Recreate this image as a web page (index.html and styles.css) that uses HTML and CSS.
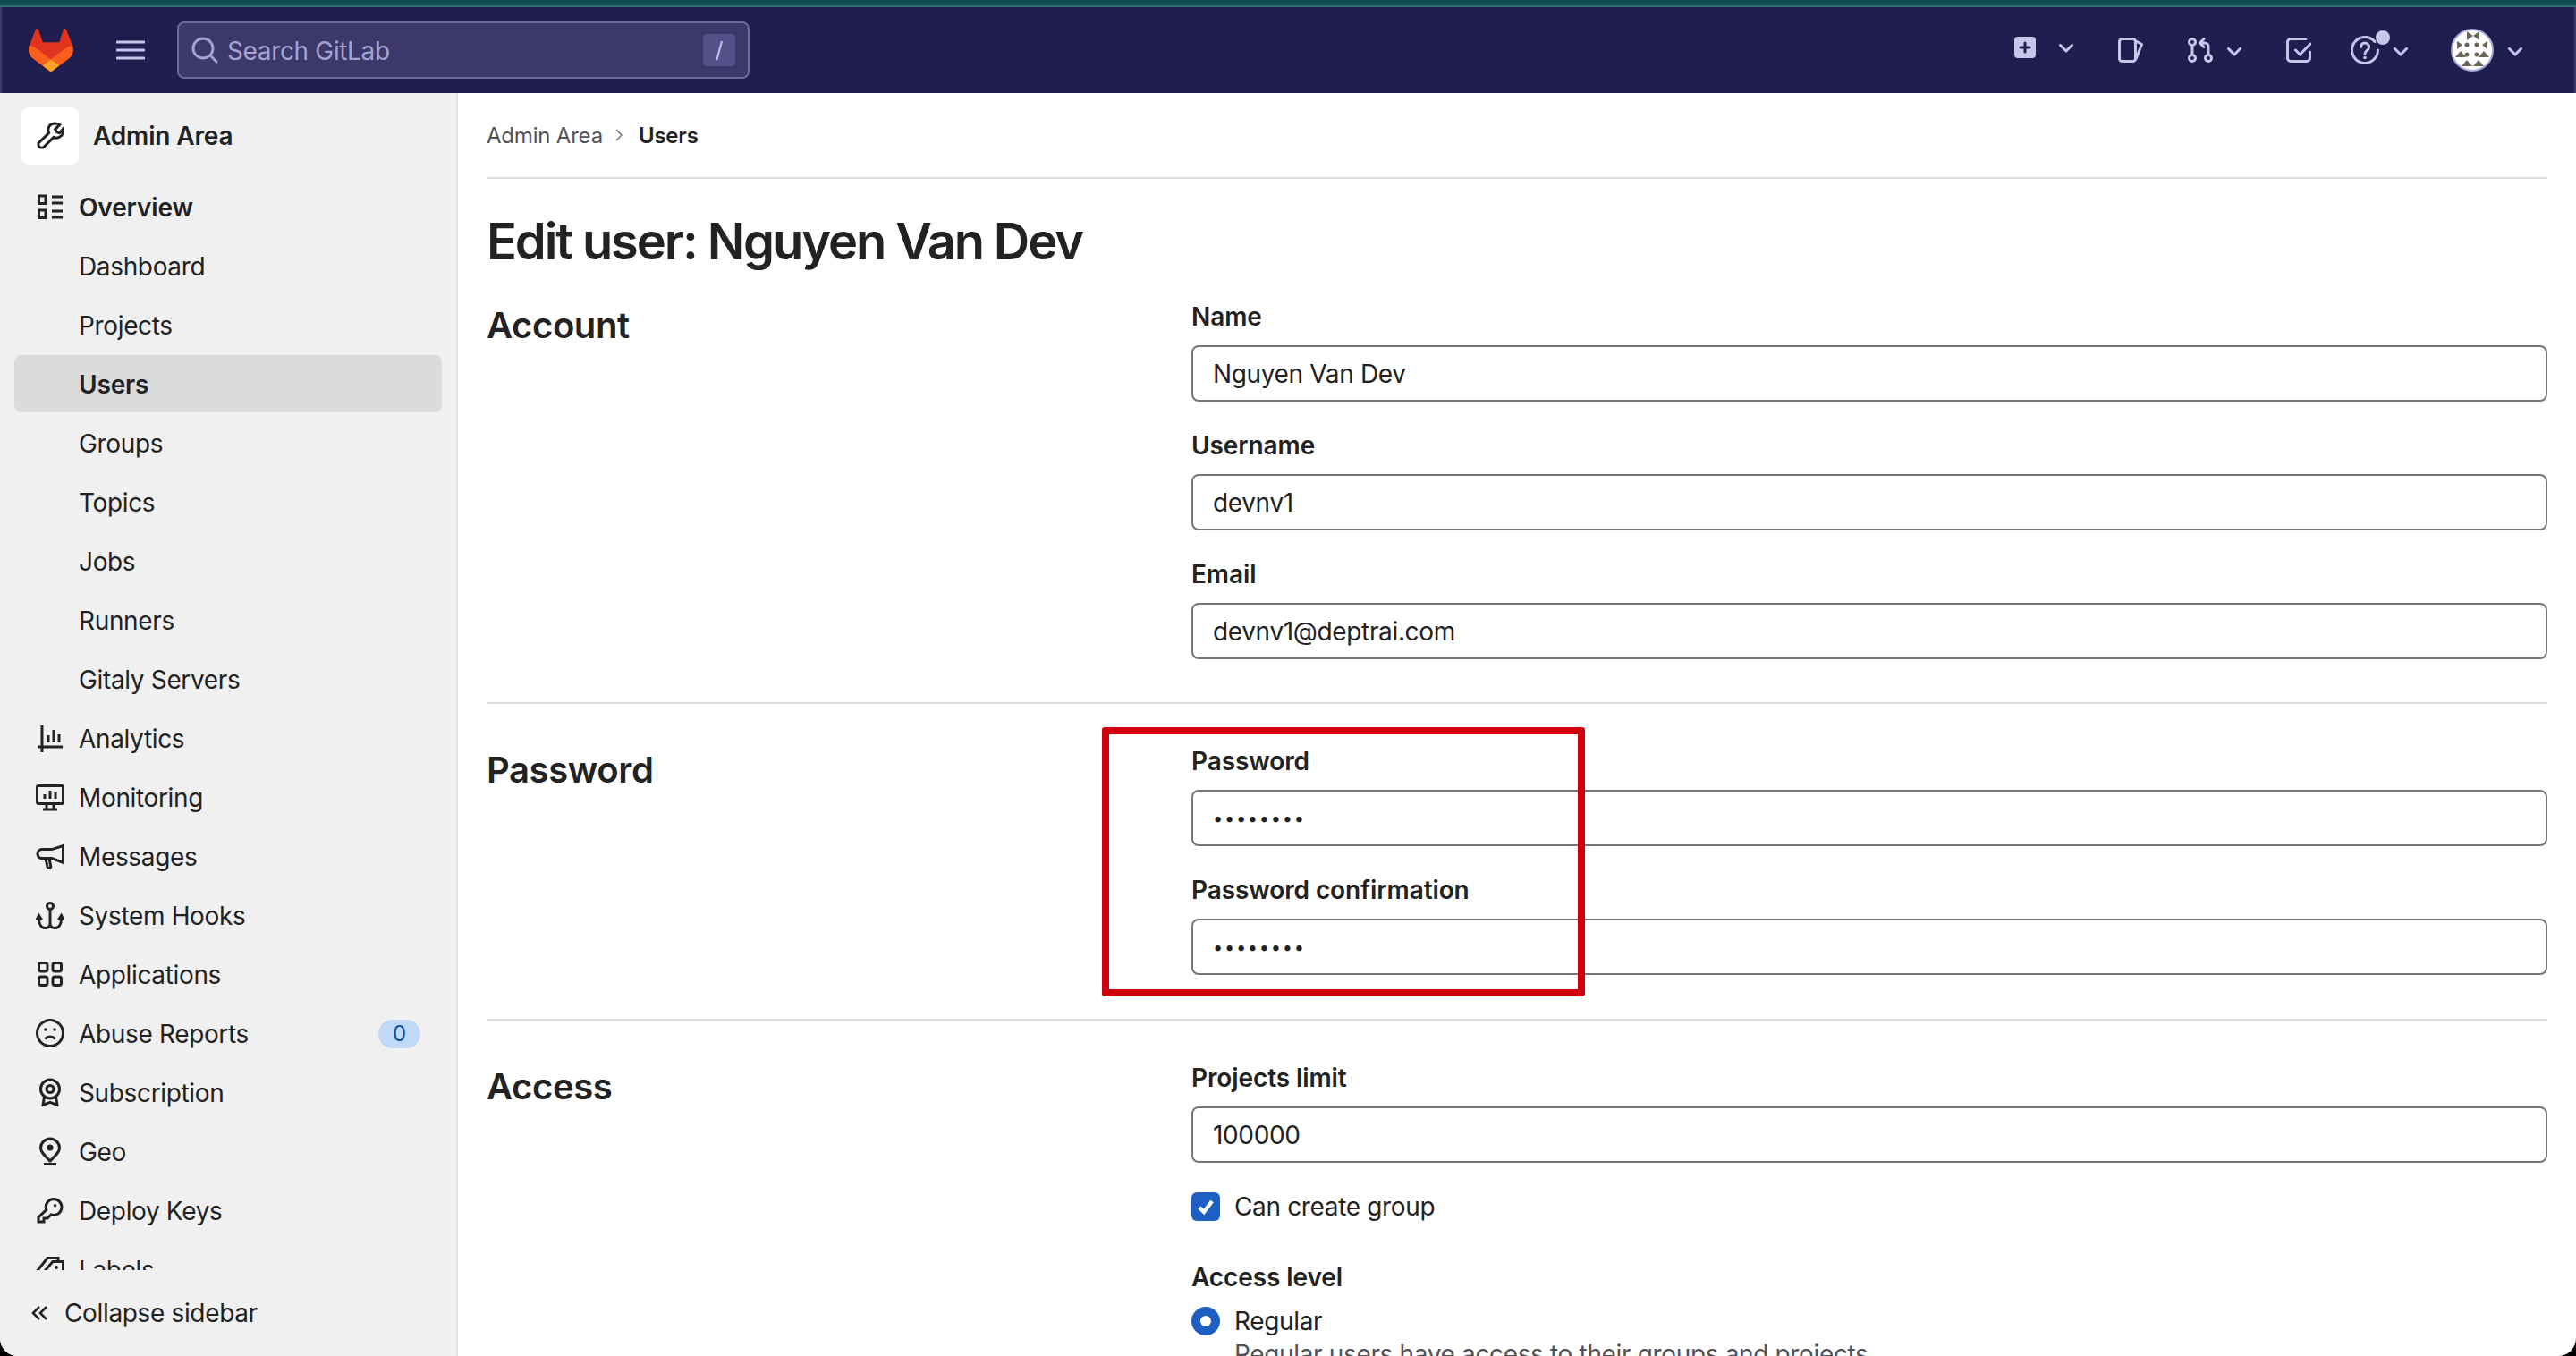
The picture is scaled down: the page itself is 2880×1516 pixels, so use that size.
FILE: index.html
```html
<!DOCTYPE html>
<html lang="en">
<head>
    <meta charset="UTF-8">
    <title>Edit user - Admin Area - GitLab</title>
    <link rel="stylesheet" href="styles.css">
</head>
<body>
<div class="page">
    <div class="top-strip"></div>

    <!-- top navbar -->
    <header class="navbar">
        <svg class="logo" viewBox="0 0 25 24">
            <path d="m24.507 9.5-.034-.09L21.082.562a.896.896 0 0 0-1.694.091l-2.29 7.01H7.825L5.535.653a.898.898 0 0 0-1.694-.09L.451 9.411.416 9.5a6.297 6.297 0 0 0 2.09 7.278l.012.01.03.022 5.16 3.867 2.56 1.935 1.554 1.176a1.051 1.051 0 0 0 1.268 0l1.555-1.176 2.56-1.935 5.197-3.89.014-.01A6.297 6.297 0 0 0 24.507 9.5Z" fill="#e0341f"/>
            <path d="m24.507 9.5-.034-.09a11.44 11.44 0 0 0-4.56 2.051l-7.447 5.632 4.742 3.584 5.197-3.89.014-.01A6.297 6.297 0 0 0 24.507 9.5Z" fill="#fb5f1e"/>
            <path d="m7.707 20.677 2.56 1.935 1.555 1.176a1.051 1.051 0 0 0 1.268 0l1.555-1.176 2.56-1.935-4.743-3.584-4.755 3.584Z" fill="#fca326"/>
            <path d="M5.01 11.461a11.43 11.43 0 0 0-4.56-2.05L.416 9.5a6.297 6.297 0 0 0 2.09 7.278l.012.01.03.022 5.16 3.867 4.745-3.584-7.444-5.632Z" fill="#fb5f1e"/>
        </svg>
        <svg class="hamburger" viewBox="0 0 32 22"><path d="M1 2h30M1 11h30M1 20h30"/></svg>
        <div class="search">
            <svg class="search-icon" viewBox="0 0 30 30"><circle cx="13" cy="13" r="11"/><path d="m21 21 7 7"/></svg>
            <span class="search-text">Search GitLab</span>
            <kbd class="search-key">/</kbd>
        </div>
        <div class="nav-actions">
            <div class="nav-action">
                <svg class="nav-plus" viewBox="0 0 24 24"><rect width="24" height="24" rx="4" fill="#c7c5ea"/><path d="M12 7v10M7 12h10" stroke="#1f1e4f" stroke-width="3" stroke-linecap="round" fill="none"/></svg>
                <svg class="chevron chevron-high" viewBox="0 0 16 10"><path d="m1.5 1.5 6.5 6.5 6.5-6.5"/></svg>
            </div>
            <svg class="nav-icon" viewBox="0 0 28 28"><rect x="1.5" y="1.5" width="18" height="25" rx="3"/><path d="m20 4 6.5 3.5L20 24"/></svg>
            <div class="nav-action">
                <svg class="nav-icon" viewBox="0 0 28 28"><circle cx="5" cy="5" r="3.5"/><circle cx="5" cy="23" r="3.5"/><circle cx="23" cy="23" r="3.5"/><path d="M5 8.5v11M23 19.5V10a4 4 0 0 0-4-4h-4M18 1.5 13.5 6l4.5 4.5"/></svg>
                <svg class="chevron" viewBox="0 0 16 10"><path d="m1.5 1.5 6.5 6.5 6.5-6.5"/></svg>
            </div>
            <svg class="nav-icon" viewBox="0 0 28 28"><path d="M22 1.5H5A3.500 3.500 0 0 0 1.500 5v18A3.500 3.500 0 0 0 5 26.500h18a3.500 3.500 0 0 0 3.500-3.500v-7"/><path d="m10.500 14 5 5L27 7"/></svg>
            <div class="nav-action nav-help">
                <svg class="nav-help-icon" viewBox="0 0 32 32"><path d="M27 6.500A14.500 14.500 0 1 0 30.500 16"/><path d="M11.500 12.500a4.500 4.500 0 1 1 7 3.700c-1.500 1-2.500 1.800-2.500 3.800"/><circle cx="16" cy="24.500" r="1.800" class="icon-solid"/></svg>
                <span class="help-dot"></span>
                <svg class="chevron" viewBox="0 0 16 10"><path d="m1.5 1.5 6.5 6.5 6.5-6.5"/></svg>
            </div>
            <div class="nav-action nav-user">
                <svg class="avatar" viewBox="0 0 48 48">
                    <circle cx="24" cy="24" r="23" fill="#fff" stroke="#a9a6d8" stroke-width="2"/>
                    <path fill="#6b6459" d="M18 3l7 5-7 5zM32 3l-7 5 7 5zM7 14l6 4-6 5zM41 14l-6 4 6 5zM5 32l6-7 6 7zM31 32l6-7 6 7zM12 42l6-7 6 7zM25 42l6-7 6 7z"/>
                    <circle cx="18" cy="18" r="2.500" fill="#6b6459"/><circle cx="29" cy="18" r="2.500" fill="#6b6459"/>
                    <circle cx="18" cy="29" r="2.500" fill="#6b6459"/><circle cx="29" cy="29" r="2.500" fill="#6b6459"/>
                </svg>
                <svg class="chevron" viewBox="0 0 16 10"><path d="m1.5 1.5 6.5 6.5 6.5-6.5"/></svg>
            </div>
        </div>
    </header>

    <div class="layout">
        <!-- sidebar -->
        <aside class="sidebar">
            <div class="sidebar-head">
                <span class="sidebar-tile">
                    <svg class="icon" viewBox="0 0 16 16"><path d="M13.300 1.800 10.800 4.300l.9 1.500 1.500.6 2-2.300c.4 2-.4 4-2.400 4.700-1 .4-2 .3-2.800-.1L4.700 14c-.8.800-2.100.7-2.800 0-.6-.7-.6-1.800.1-2.500l5.300-5.200c-.5-1-.5-2.300 0-3.300C8.100 1.100 11 .4 13.300 1.800Z"/></svg>
                </span>
                <span class="sidebar-title">Admin Area</span>
            </div>
            <nav class="sidebar-nav">
                <a class="nav-link nav-link-bold">
                    <svg class="icon" viewBox="0 0 16 16"><rect x="1.750" y="2" width="3.750" height="4.250"/><rect x="1.750" y="10" width="3.750" height="4.250"/><path d="M9 2.500h6M9 6h6M9 10.500h6M9 14h6"/></svg>
                    <span class="nav-text">Overview</span>
                </a>
                <a class="nav-link nav-sub"><span class="nav-text">Dashboard</span></a>
                <a class="nav-link nav-sub"><span class="nav-text">Projects</span></a>
                <a class="nav-link nav-sub nav-link-active"><span class="nav-text">Users</span></a>
                <a class="nav-link nav-sub"><span class="nav-text">Groups</span></a>
                <a class="nav-link nav-sub"><span class="nav-text">Topics</span></a>
                <a class="nav-link nav-sub"><span class="nav-text">Jobs</span></a>
                <a class="nav-link nav-sub"><span class="nav-text">Runners</span></a>
                <a class="nav-link nav-sub"><span class="nav-text">Gitaly Servers</span></a>
                <a class="nav-link">
                    <svg class="icon" viewBox="0 0 16 16"><path d="M3.500 1v15M1 13h14M7 6.500V10.500M10 3.500v7M13 6v4.500"/></svg>
                    <span class="nav-text">Analytics</span>
                </a>
                <a class="nav-link">
                    <svg class="icon" viewBox="0 0 16 16"><rect x=".75" y="1.750" width="14.500" height="10" rx=".7"/><path d="M4 15h8M6 12v3M10 12v3M5 6.500v2.500M8 4.500v4.500M11 5.500v3.500"/></svg>
                    <span class="nav-text">Monitoring</span>
                </a>
                <a class="nav-link">
                    <svg class="icon" viewBox="0 0 16 16"><path d="M15.250 2.300v9.400L9 9.300H3.500a2.500 2.500 0 0 1 0-5H9ZM5.500 9.500l1 4.700c.4 1 2 .6 1.900-.5l-.9-4"/></svg>
                    <span class="nav-text">Messages</span>
                </a>
                <a class="nav-link">
                    <svg class="icon" viewBox="0 0 16 16"><circle cx="8" cy="3" r="1.750"/><path d="M8 4.750V12.500c0 1.600-1 2.750-2.500 2.750-2.300 0-3.750-2-3.750-5V8.500M8 12.500c0 1.600 1 2.750 2.500 2.750 2.300 0 3.750-2 3.750-5V8.500"/><path d="m.5 10.700 1.250-2.400L3.300 10.700M12.700 10.700l1.550-2.400 1.250 2.400"/></svg>
                    <span class="nav-text">System Hooks</span>
                </a>
                <a class="nav-link">
                    <svg class="icon" viewBox="0 0 16 16"><rect x="1.750" y="1.750" width="4.750" height="4.750" rx="1.200"/><rect x="9.500" y="1.750" width="4.750" height="4.750" rx="1.200"/><rect x="1.750" y="9.500" width="4.750" height="4.750" rx="1.200"/><rect x="9.500" y="9.500" width="4.750" height="4.750" rx="1.200"/></svg>
                    <span class="nav-text">Applications</span>
                </a>
                <a class="nav-link">
                    <svg class="icon" viewBox="0 0 16 16"><circle cx="8" cy="8" r="7.250"/><circle cx="5.500" cy="6" r=".9" class="icon-solid"/><circle cx="10.500" cy="6" r=".9" class="icon-solid"/><path d="M5.200 11.300c1.500-1.700 4.100-1.700 5.600 0"/></svg>
                    <span class="nav-text">Abuse Reports</span>
                    <span class="badge">0</span>
                </a>
                <a class="nav-link">
                    <svg class="icon" viewBox="0 0 16 16"><circle cx="8" cy="6.250" r="5.250"/><circle cx="8" cy="6.250" r="2"/><path d="m4.800 10.500-.8 4.700 4-1.500 4 1.500-.8-4.700"/></svg>
                    <span class="nav-text">Subscription</span>
                </a>
                <a class="nav-link">
                    <svg class="icon" viewBox="0 0 16 16"><path d="M8 13.500c-3-3-5.250-5-5.250-7.250a5.250 5.250 0 0 1 10.500 0C13.250 8.500 11 10.500 8 13.500ZM4.500 15.250h7"/><circle cx="8" cy="6" r="1.750" class="icon-solid"/></svg>
                    <span class="nav-text">Geo</span>
                </a>
                <a class="nav-link">
                    <svg class="icon" viewBox="0 0 16 16"><path d="M10 1.750a4.500 4.500 0 1 1-1.500 8.750L6.500 12.500h-2v2h-3V12l4.400-4.200A4.500 4.500 0 0 1 10 1.750Z"/><circle cx="10.800" cy="5.400" r=".9" class="icon-solid"/></svg>
                    <span class="nav-text">Deploy Keys</span>
                </a>
                <a class="nav-link">
                    <svg class="icon" viewBox="0 0 16 16"><path d="M.75 9 6.500 1.750h6V3.500M5 9l4.500-5.250h5.750V12L10.500 15.250 5 9Z"/><circle cx="11.500" cy="7" r="1" class="icon-solid"/></svg>
                    <span class="nav-text">Labels</span>
                </a>
            </nav>
            <div class="collapse">
                <svg class="collapse-icon" viewBox="0 0 18 18"><path d="M9 2 2 9l7 7M17 2l-7 7 7 7"/></svg>
                Collapse sidebar
            </div>
        </aside>

        <main class="content">
            <div class="breadcrumb">
                <span class="crumb">Admin Area</span>
                <svg class="crumb-sep" viewBox="0 0 8 14"><path d="m1 1 6 6-6 6"/></svg>
                <span class="crumb-current">Users</span>
            </div>
            <h1 class="page-title">Edit user: Nguyen Van Dev</h1>

            <section class="form-section">
                <h2 class="section-title">Account</h2>
                <div class="section-fields">
                    <div class="field">
                        <label class="field-label">Name</label>
                        <input class="field-input" type="text" value="Nguyen Van Dev">
                    </div>
                    <div class="field">
                        <label class="field-label">Username</label>
                        <input class="field-input" type="text" value="devnv1">
                    </div>
                    <div class="field">
                        <label class="field-label">Email</label>
                        <input class="field-input" type="text" value="devnv1@deptrai.com">
                    </div>
                </div>
            </section>

            <section class="form-section">
                <h2 class="section-title">Password</h2>
                <div class="section-fields">
                    <div class="field">
                        <label class="field-label">Password</label>
                        <input class="field-input field-password" type="password" value="12345678">
                    </div>
                    <div class="field">
                        <label class="field-label">Password confirmation</label>
                        <input class="field-input field-password" type="password" value="12345678">
                    </div>
                </div>
            </section>

            <section class="form-section">
                <h2 class="section-title">Access</h2>
                <div class="section-fields">
                    <div class="field">
                        <label class="field-label">Projects limit</label>
                        <input class="field-input" type="text" value="100000">
                    </div>
                    <div class="choice choice-check">
                        <span class="checkbox">
                            <svg viewBox="0 0 16 16"><path d="m4.500 8.500 2.500 2.500 4.500-6" fill="none" stroke="#fff" stroke-width="2.200"/></svg>
                        </span>
                        Can create group
                    </div>
                    <div class="field-label level-label">Access level</div>
                    <div class="choice">
                        <span class="radio"></span>
                        Regular
                    </div>
                    <p class="choice-help">Regular users have access to their groups and projects</p>
                </div>
            </section>
        </main>
    </div>

    <!-- red box drawn over the screenshot -->
    <div class="annotation"></div>
</div>
</body>
</html>
```

FILE: styles.css
```css
/* page frame */
html, body {
    margin: 0;
    height: 100%;
    background: #000;
}

.page {
    position: relative;
    display: flex;
    flex-direction: column;
    width: 2880px;
    height: 1516px;
    overflow: hidden;
    border-radius: 0 0 20px 20px;
    background: #fff;
    font-family: Inter, "Noto Sans", sans-serif;
    font-size: 28px;
    letter-spacing: -0.35px;
    color: #222;
}

.top-strip {
    flex: none;
    height: 6px;
    background: #0e4a52;
    border-bottom: 2px solid #2c6d72;
}

/* navbar */
.navbar {
    flex: none;
    display: flex;
    align-items: center;
    height: 96px;
    padding: 0 58px 0 30px;
    background: #1f1e4f;
    border-left: 2px solid #3d3b6c;
    border-right: 2px solid #3d3b6c;
}

.logo {
    width: 50px;
    height: 48px;
}

.hamburger {
    width: 32px;
    height: 22px;
    margin-left: 48px;
    fill: none;
    stroke: #c7c5ea;
    stroke-width: 3;
    stroke-linecap: round;
}

.search {
    display: flex;
    align-items: center;
    box-sizing: border-box;
    width: 640px;
    height: 64px;
    margin-left: 36px;
    padding: 0 14px;
    background: #3c3869;
    border: 2px solid #6d69a1;
    border-radius: 8px;
}

.search-icon {
    width: 30px;
    height: 30px;
    fill: none;
    stroke: #a5a1d3;
    stroke-width: 3;
    stroke-linecap: round;
}

.search-text {
    flex: 1;
    margin-left: 10px;
    padding-top: 2px;
    color: #a5a1d3;
}

.search-key {
    width: 36px;
    height: 36px;
    background: #53508a;
    border-radius: 4px;
    color: #c7c5ea;
    font: 24px/36px Inter, sans-serif;
    text-align: center;
}

.nav-actions {
    display: flex;
    align-items: center;
    gap: 50px;
    margin-left: auto;
}

.nav-action {
    position: relative;
    display: flex;
    align-items: center;
    gap: 16px;
}

.nav-icon, .nav-help-icon, .chevron {
    fill: none;
    stroke: #c7c5ea;
    stroke-width: 3;
    stroke-linecap: round;
    stroke-linejoin: round;
}

.nav-icon {
    width: 28px;
    height: 28px;
}

.nav-plus {
    width: 24px;
    height: 24px;
    margin-top: -6px;
    margin-right: 10px;
}

.chevron {
    width: 16px;
    height: 10px;
    margin-top: 3px;
}

.chevron-high {
    margin-top: -5px;
}

.nav-help {
    margin-left: -6px;
}

.nav-help-icon {
    width: 32px;
    height: 32px;
}

.nav-help-icon .icon-solid {
    fill: #c7c5ea;
    stroke: none;
}

.help-dot {
    position: absolute;
    left: 28px;
    top: -6px;
    width: 16px;
    height: 16px;
    background: #c7c5ea;
    border-radius: 50%;
}

.nav-user {
    margin-left: -2px;
}

.avatar {
    width: 48px;
    height: 48px;
}

/* sidebar + content */
.layout {
    flex: 1;
    display: flex;
    min-height: 0;
}

.sidebar {
    flex: none;
    display: flex;
    flex-direction: column;
    box-sizing: border-box;
    width: 512px;
    background: #f0f0f0;
    border-right: 2px solid #e3e3e3;
}

.sidebar-head {
    display: flex;
    align-items: center;
    gap: 16px;
    padding: 16px 0 15px 24px;
}

.sidebar-tile {
    display: flex;
    align-items: center;
    justify-content: center;
    width: 64px;
    height: 64px;
    background: #fff;
    border-radius: 8px;
}

.sidebar-title {
    font-weight: 600;
    letter-spacing: -0.15px;
}

.icon {
    flex: none;
    width: 32px;
    height: 32px;
    fill: none;
    stroke: #222;
    stroke-width: 1.5;
}

.icon .icon-solid {
    fill: #222;
    stroke: none;
}

.sidebar-nav {
    flex: 1;
    min-height: 0;
    overflow: hidden;
}

.nav-link {
    display: flex;
    align-items: center;
    gap: 16px;
    box-sizing: border-box;
    height: 64px;
    margin: 0 16px 2px;
    padding: 0 24px;
    border-radius: 8px;
    white-space: nowrap;
}

.nav-text {
    padding-top: 2px;
}

.nav-sub {
    padding-left: 72px;
}

.nav-link-bold, .nav-link-active {
    font-weight: 600;
    letter-spacing: -0.15px;
}

.nav-link-active {
    background: #dbdbdb;
}

.badge {
    margin: 2px 0 0 auto;
    width: 47px;
    height: 32px;
    background: #bfd9f7;
    border-radius: 16px;
    color: #0b4ea2;
    font-size: 24px;
    line-height: 32px;
    text-align: center;
}

.collapse {
    flex: none;
    display: flex;
    align-items: center;
    gap: 19px;
    height: 96px;
    padding-left: 35px;
}

.collapse-icon {
    width: 18px;
    height: 18px;
    fill: none;
    stroke: #222;
    stroke-width: 2.500;
}

.content {
    flex: 1;
    min-width: 0;
    padding: 0 32px;
}

/* breadcrumb */
.breadcrumb {
    display: flex;
    align-items: center;
    height: 94px;
    border-bottom: 2px solid #dcdcde;
    font-size: 24px;
    letter-spacing: -0.2px;
}

.crumb {
    color: #535158;
}

.crumb-sep {
    width: 8px;
    height: 14px;
    margin: 0 18px 0 14px;
    fill: none;
    stroke: #737278;
    stroke-width: 1.500;
}

.crumb-current {
    font-weight: 600;
}

.page-title {
    margin: 35px 0 0;
    font-size: 56px;
    font-weight: 600;
    letter-spacing: -2.1px;
    line-height: 70px;
}

/* form sections */
.form-section {
    display: grid;
    grid-template-columns: 788px 1fr;
    padding: 45px 0 49px;
    border-top: 2px solid #dcdcde;
}

.page-title + .form-section {
    padding-top: 30px;
    padding-bottom: 48px;
    border-top: 0;
}

.section-title {
    margin: 0;
    padding-top: 2px;
    font-size: 40px;
    font-weight: 600;
    letter-spacing: -0.4px;
    line-height: 54px;
}

.field + .field {
    margin-top: 30px;
}

.field-label {
    display: block;
    margin-bottom: 15px;
    padding-top: 2px;
    font-weight: 600;
    letter-spacing: -0.1px;
    line-height: 34px;
}

.field-input {
    display: block;
    box-sizing: border-box;
    width: 100%;
    height: 63px;
    padding: 0 22px;
    background: #fff;
    border: 2px solid #767676;
    border-radius: 8px;
    color: #222;
    font: 28px Inter, sans-serif;
    letter-spacing: -0.35px;
    outline: none;
}

.field-password {
    font-size: 20px;
    letter-spacing: 1.7px;
}

.choice {
    display: flex;
    align-items: center;
    gap: 16px;
    height: 32px;
}

.choice-check {
    margin-top: 33px;
}

.level-label {
    margin: 44px 0 16px;
}

.checkbox {
    display: block;
    width: 32px;
    height: 32px;
    background: #1f5fc4;
    border-radius: 6px;
}

.radio {
    display: block;
    box-sizing: border-box;
    width: 32px;
    height: 32px;
    background: #fff;
    border: 10px solid #1f5fc4;
    border-radius: 50%;
}

.choice-help {
    margin: 4px 0 0 48px;
    color: #535158;
    line-height: 34px;
}

/* annotation */
.annotation {
    position: absolute;
    left: 1232px;
    top: 813px;
    box-sizing: border-box;
    width: 540px;
    height: 301px;
    border: 8px solid #d0000f;
    border-radius: 3px;
}
```
